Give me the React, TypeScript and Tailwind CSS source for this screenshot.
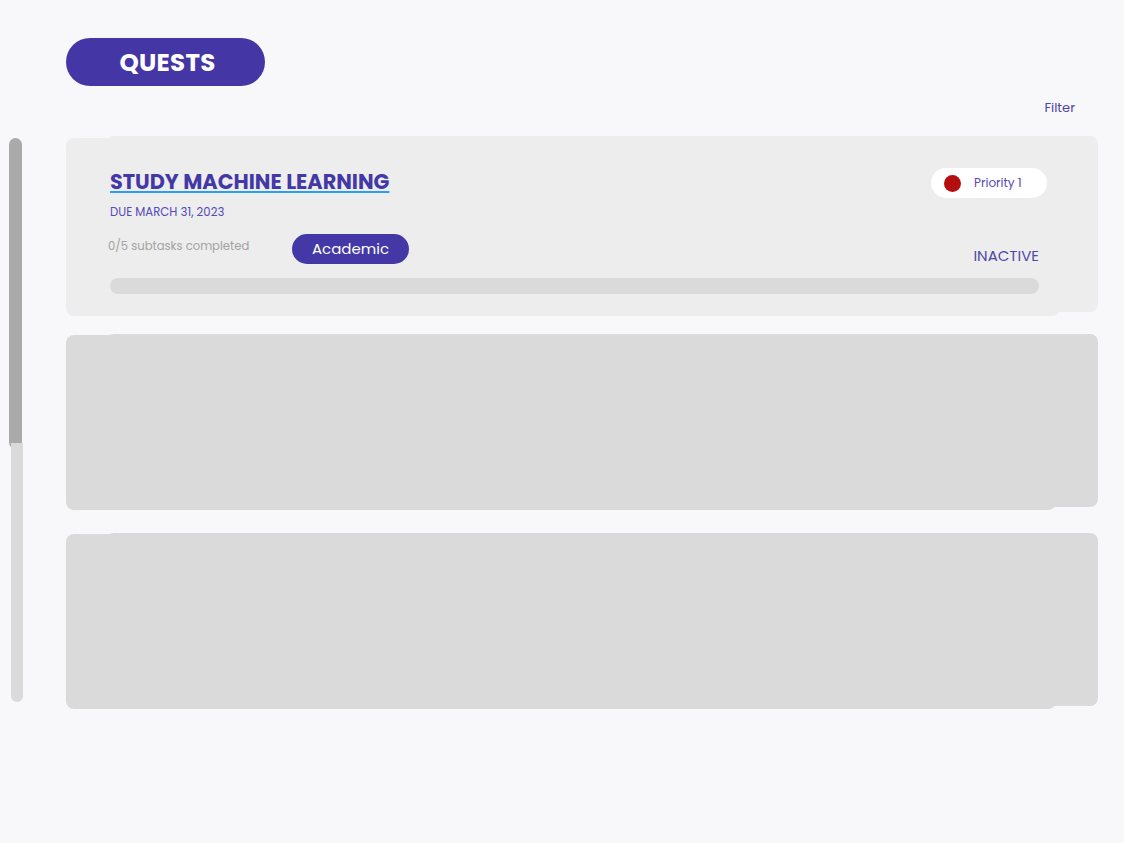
import React from 'react';

const font = "font-['Poppins','Inter',sans-serif]";

const QuestCard: React.FC = () => (
  <div className="relative h-[180px]">
    {/* layered card backgrounds */}
    <div className="absolute left-0 top-[2px] h-[178px] w-[994px] rounded-lg bg-[#ededed]" />
    <div className="absolute left-[40px] top-0 h-[176px] w-[992px] rounded-lg bg-[#ededed]" />
    <div className="relative flex h-full flex-col pl-[44px] pr-[51px] pt-[33px]">
      <div className="flex items-start justify-between">
        <div className="flex flex-col">
          <a className="text-[20.8px] font-bold leading-[26px] text-[#4338a6] underline decoration-[#2a9df4] decoration-2 underline-offset-[2px]">
            STUDY MACHINE LEARNING
          </a>
          <span className="mt-[10px] text-[11.7px] leading-[14px] text-[#5548b8]">DUE MARCH 31, 2023</span>
        </div>
        <div className="-mt-[1px] flex h-[30px] w-[116px] items-center gap-[13px] rounded-full bg-white pl-[13px]">
          <span className="h-[17px] w-[17px] rounded-full bg-[#b50e0e]" />
          <span className="text-[12px] text-[#5548b8]">Priority 1</span>
        </div>
      </div>
      <div className="mt-[15px] flex items-start justify-between">
        <div className="flex items-start">
          <span className="-ml-[2px] mt-[4px] w-[184px] text-[11.6px] text-[#a3a3a3]">0/5 subtasks completed</span>
          <span className="flex h-[30px] w-[117px] items-center justify-center rounded-full bg-[#4338a6] text-[15px] text-white">
            Academic
          </span>
        </div>
        <span className="mr-[8px] mt-[11px] text-[15px] leading-[22px] text-[#5048a8]">INACTIVE</span>
      </div>
      <div className="mt-[11px] mr-[8px] h-[16px] rounded-full bg-[#dadada]" />
    </div>
  </div>
);

const EmptyCard: React.FC = () => (
  <div className="relative h-[176px]">
    <div className="absolute left-0 top-[1px] h-[175px] w-[990px] rounded-lg bg-[#dadada]" />
    <div className="absolute left-[40px] top-0 h-[173px] w-[992px] rounded-lg bg-[#dadada]" />
  </div>
);

export default function App() {
  return (
    <div className={`flex min-h-[843px] w-full bg-[#f8f8fa] ${font}`}>
      <div className="w-[66px] pl-[9px] pt-[138px]">
        <div className="flex h-[564px] w-[15px] flex-col">
          <div className="h-[311px] w-[13px] rounded-full bg-[#aaaaaa]" />
          <div className="-mt-[6px] ml-[2px] h-[259px] w-[12px] rounded-b-full bg-[#dadada]" />
        </div>
      </div>
      <div className="flex w-[1032px] flex-col pt-[38px]">
        <div className="flex h-[48px] w-[199px] items-center justify-center rounded-full bg-[#4437a5] pl-[4px] pt-[2px] text-[24.5px] font-bold tracking-[0.3px] text-white">
          QUESTS
        </div>
        <div className="mt-[14px] flex h-[16px] justify-end pr-[23px]">
          <span className="text-[13px] leading-[16px] text-[#4f46a5]">Filter</span>
        </div>
        <div className="mt-[20px] flex flex-col">
          <QuestCard />
          <div className="mt-[18px]">
            <EmptyCard />
          </div>
          <div className="mt-[23px]">
            <EmptyCard />
          </div>
        </div>
      </div>
    </div>
  );
}
